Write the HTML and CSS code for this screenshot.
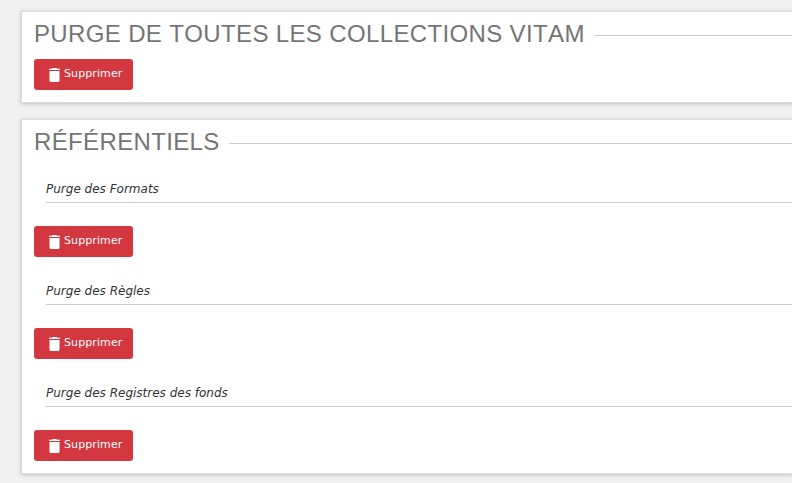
FILE: index.html
```html
<!DOCTYPE html>
<html lang="fr">
<head>
<meta charset="utf-8">
<title>Purge</title>
<link rel="stylesheet" href="styles.css">
</head>
<body>
<svg class="defs"><symbol id="trash" viewBox="0 0 12 16"><path d="M0 1.700h2.800l.8-.8h3.800l.8.8H11v1.400H0zM.5 4h10v9.500A1.500 1.500 0 0 1 9 15H2a1.500 1.500 0 0 1-1.500-1.500z"/></symbol></svg>
<main class="page">
<section class="panel">
<h2 class="title"><span>PURGE DE TOUTES LES COLLECTIONS VITAM</span></h2>
<button class="btn"><svg class="icon"><use href="#trash"/></svg>Supprimer</button>
</section>
<section class="panel">
<h2 class="title"><span>RÉFÉRENTIELS</span></h2>
<h3 class="subtitle">Purge des Formats</h3>
<button class="btn"><svg class="icon"><use href="#trash"/></svg>Supprimer</button>
<h3 class="subtitle">Purge des Règles</h3>
<button class="btn"><svg class="icon"><use href="#trash"/></svg>Supprimer</button>
<h3 class="subtitle">Purge des Registres des fonds</h3>
<button class="btn"><svg class="icon"><use href="#trash"/></svg>Supprimer</button>
</section>
</main>
</body>
</html>
```
FILE: styles.css
```css
* { box-sizing: border-box; }
body { margin: 0; background: #f1f1f1; overflow: hidden; height: 483px; }
.defs { display: none; }
.page { padding: 12px 0 0 22px; }
.panel { background: #fff; margin-bottom: 18px; padding: 8px 0 12px 12px; box-shadow: -1px 0 0 1px #dcdcdc, 0 1px 4px 1px rgba(0,0,0,.2); }
.title { display: flex; align-items: center; gap: 9px; margin: 0; height: 28px; font: 400 24px/28px "Liberation Sans", sans-serif; font-kerning: none; letter-spacing: .36px; color: #757575; white-space: nowrap; }
.title::after { content: ""; flex: 1; height: 1px; background: #ccc; margin-top: 3px; }
.btn { display: flex; align-items: center; width: 99px; height: 31px; margin: 11px 0 0; padding: 0 0 2px 15px; border: 0; border-radius: 3px; background: #d33740; color: #fff; font: 11px/16px "DejaVu Sans", sans-serif; letter-spacing: .1px; }
.icon { flex: none; width: 12px; height: 16px; margin: 3px 3px 0 0; fill: currentColor; }
.subtitle { margin: 23px 0 23px 12px; padding-top: 1px; height: 24px; border-bottom: 1px solid #ccc; font: italic 400 12px/18px "DejaVu Sans", sans-serif; color: #333; }
.btn + .subtitle { margin-top: 24px; }
.subtitle + .btn { margin-top: 0; }
```
